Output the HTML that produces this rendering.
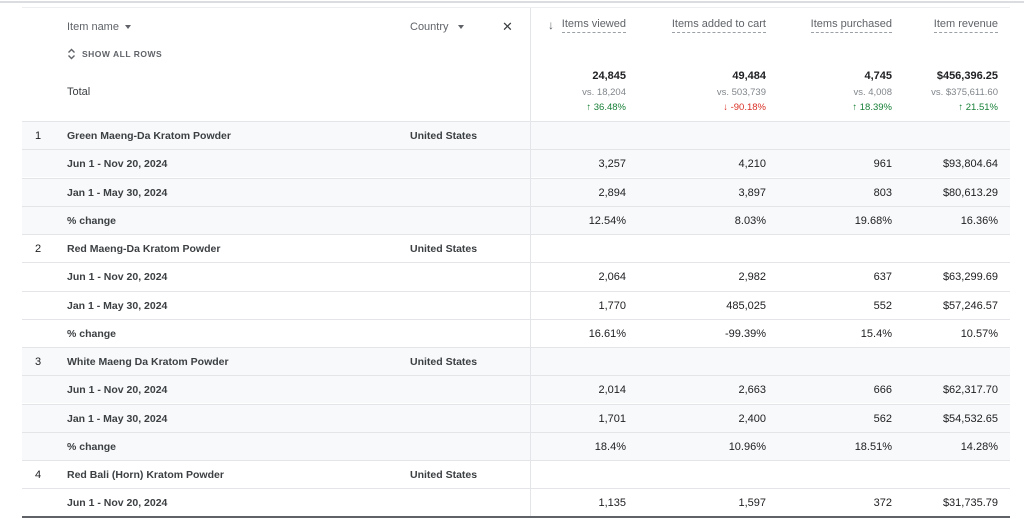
<!DOCTYPE html>
<html><head><style>
*{margin:0;padding:0;box-sizing:border-box}
body{width:1024px;height:519px;background:#fff;font-family:"Liberation Sans",Arial,sans-serif;position:relative;overflow:hidden;color:#202124}
.a{position:absolute;white-space:nowrap}
.r{text-align:right}
.hd{font-size:11px;color:#5f6368;border-bottom:1px dashed #9aa0a6;padding-bottom:2px}
.row{position:absolute;left:22px;width:988px;height:28px;border-top:1px solid #e3e5e8;font-size:10.5px;font-weight:bold;color:#3c4043}
.row.g{background:#f8f9fa}
.row span{position:absolute;top:8px}
.n{font-weight:normal;color:#202124;font-size:11px}
.tri{display:inline-block;width:0;height:0;border-left:3.5px solid transparent;border-right:3.5px solid transparent;border-top:4px solid #5f6368;vertical-align:middle;margin-left:6px}
</style></head><body>
<div class="a" style="left:0;top:1px;width:1024px;height:2px;background:#dadce0"></div>
<div class="a" style="left:22px;top:7px;width:988px;height:1px;background:#eceef0"></div>
<div class="a" style="left:530px;top:8px;width:1px;height:508px;background:#e3e5e8;z-index:2"></div>

<div class="a" style="left:67px;top:21px;font-size:11px;color:#5f6368">Item name<span class="tri"></span></div>
<div class="a" style="left:410px;top:21px;font-size:11px;color:#5f6368">Country<span class="tri" style="margin-left:9px"></span></div>
<div class="a" style="left:502px;top:19px;font-size:13px;color:#3c4043">✕</div>
<svg class="a" style="left:67px;top:48px" width="9" height="12" viewBox="0 0 9 12"><path d="M1.5 4.5L4.5 1.5L7.5 4.5M1.5 7.5L4.5 10.5L7.5 7.5" fill="none" stroke="#5f6368" stroke-width="1.4"/></svg>
<div class="a" style="left:82px;top:49px;font-size:8.5px;color:#5f6368;font-weight:bold;letter-spacing:.5px">SHOW ALL ROWS</div>
<div class="a" style="left:67px;top:86px;font-size:11px;color:#3c4043">Total</div>

<div class="a" style="left:548px;top:18px;font-size:12px;color:#5f6368">↓</div>
<div class="a r hd" style="right:398px;top:18px">Items viewed</div>
<div class="a r hd" style="right:258px;top:18px">Items added to cart</div>
<div class="a r hd" style="right:132px;top:18px">Items purchased</div>
<div class="a r hd" style="right:26px;top:18px">Item revenue</div>

<div class="a r" style="right:398px;top:70px;font-size:11px;font-weight:bold">24,845</div>
<div class="a r" style="right:258px;top:70px;font-size:11px;font-weight:bold">49,484</div>
<div class="a r" style="right:132px;top:70px;font-size:11px;font-weight:bold">4,745</div>
<div class="a r" style="right:26px;top:70px;font-size:11px;font-weight:bold">$456,396.25</div>
<div class="a r" style="right:398px;top:87px;font-size:9.5px;color:#80868b">vs. 18,204</div>
<div class="a r" style="right:258px;top:87px;font-size:9.5px;color:#80868b">vs. 503,739</div>
<div class="a r" style="right:132px;top:87px;font-size:9.5px;color:#80868b">vs. 4,008</div>
<div class="a r" style="right:26px;top:87px;font-size:9.5px;color:#80868b">vs. $375,611.60</div>
<div class="a r" style="right:398px;top:102px;font-size:9.5px;color:#188038">↑ 36.48%</div>
<div class="a r" style="right:258px;top:102px;font-size:9.5px;color:#d93025">↓ -90.18%</div>
<div class="a r" style="right:132px;top:102px;font-size:9.5px;color:#188038">↑ 18.39%</div>
<div class="a r" style="right:26px;top:102px;font-size:9.5px;color:#188038">↑ 21.51%</div>

<div id="t"></div>
<script>
var g=[["1","Green Maeng-Da Kratom Powder",["3,257","4,210","961","$93,804.64"],["2,894","3,897","803","$80,613.29"],["12.54%","8.03%","19.68%","16.36%"]],
["2","Red Maeng-Da Kratom Powder",["2,064","2,982","637","$63,299.69"],["1,770","485,025","552","$57,246.57"],["16.61%","-99.39%","15.4%","10.57%"]],
["3","White Maeng Da Kratom Powder",["2,014","2,663","666","$62,317.70"],["1,701","2,400","562","$54,532.65"],["18.4%","10.96%","18.51%","14.28%"]],
["4","Red Bali (Horn) Kratom Powder",["1,135","1,597","372","$31,735.79"]]];
var h="",y=121,R=[384,244,118,12];
function nums(v){var s="";for(var i=0;i<4;i++)s+='<span class="n" style="right:'+R[i]+'px">'+v[i]+'</span>';return s;}
var l=["Jun 1 - Nov 20, 2024","Jan 1 - May 30, 2024","% change"];
g.forEach(function(p,k){var c=k%2==0?" g":"";
h+='<div class="row'+c+'" style="top:'+Math.round(y)+'px"><span style="left:13px" class="n">'+p[0]+'</span><span style="left:45px">'+p[1]+'</span><span style="left:388px">United States</span></div>';y+=28.25;
for(var j=2;j<p.length;j++){h+='<div class="row'+c+'" style="top:'+Math.round(y)+'px"><span style="left:45px">'+l[j-2]+'</span>'+nums(p[j])+'</div>';y+=28.25;}
});
document.getElementById("t").innerHTML=h;
</script>
<div class="a" style="left:22px;top:516px;width:988px;height:2px;background:#5f6368"></div>
</body></html>
